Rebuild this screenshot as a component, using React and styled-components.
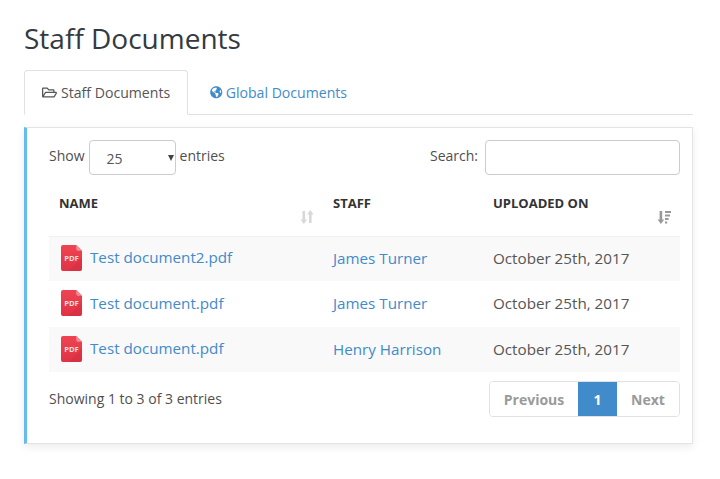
import React from "react";
import styled, { createGlobalStyle } from "styled-components";
import { FaRegFolderOpen, FaGlobeAmericas } from "react-icons/fa";

const Global = createGlobalStyle`
  html, body { margin: 0; padding: 0; background: #fff; }
  body { font-family: "Open Sans", "Noto Sans", sans-serif; font-size: 14px; color: #4a4a4a; }
  * { box-sizing: border-box; }
`;
const Page = styled.div`
  width: 720px;
  height: 479px;
  padding: 18px 27px 0 24px;
  overflow: hidden;
`;
const Title = styled.h1`
  margin: 0 0 12px;
  font-size: 28px;
  line-height: 40px;
  font-weight: 400;
  color: #333a42;
`;
const Tabs = styled.div`
  display: flex;
  height: 45px;
  border-bottom: 1px solid #e1e1e1;
  margin-bottom: 12px;
`;
const Tab = styled.div`
  height: 45px;
  display: flex;
  align-items: center;
  gap: ${p => (p.$active ? "4px" : "3px")};
  padding: 0 ${p => (p.$active ? "17px" : "21px")};
  border: 1px solid ${p => (p.$active ? "#e1e1e1" : "transparent")};
  border-bottom: 1px solid ${p => (p.$active ? "#fff" : "transparent")};
  border-radius: 4px 4px 0 0;
  background: ${p => (p.$active ? "#fff" : "transparent")};
  color: ${p => (p.$active ? "#555" : "#428bca")};
  font-size: 14.1px;
  svg { font-size: ${p => (p.$active ? "15px" : "12.5px")}; }
`;
const Panel = styled.section`
  height: 317px;
  border: 1px solid #e4e4e4;
  border-left: 3px solid #63bbee;
  padding: 12px 12px 0 22px;
  background: #fff;
  box-shadow: 0 3px 8px rgba(0, 0, 0, 0.08);
`;
const Controls = styled.div`
  display: flex;
  justify-content: space-between;
  align-items: center;
  height: 35px;
  margin-bottom: 15px;
`;
const Label = styled.label`
  display: flex;
  align-items: center;
  gap: 4px;
  color: #4f4f4f;
  line-height: 20px;
  margin-top: -4px;
`;
const FakeSelect = styled.div`
  position: relative;
  width: 87px;
  height: 35px;
  margin-top: 4px;
  border: 1px solid #ccc;
  border-radius: 4px;
  padding: 8px 0 0 17px;
  color: #555;
  line-height: 20px;
  &::after {
    content: "";
    position: absolute;
    right: 1px;
    top: 14px;
    border-left: 3.5px solid transparent;
    border-right: 3.5px solid transparent;
    border-top: 6px solid #444;
  }
`;
const SearchInput = styled.input`
  width: 195px;
  height: 35px;
  margin: 4px 0 0 3px;
  border: 1px solid #ccc;
  border-radius: 4px;
  background: #fff;
  outline: none;
`;
const Table = styled.table`
  width: 631px;
  table-layout: fixed;
  border-collapse: collapse;
`;
const HeadCell = styled.th`
  position: relative;
  width: ${p => p.$w}px;
  height: 46px;
  padding: 3px 10px 0;
  vertical-align: top;
  text-align: left;
  font-size: 13px;
  line-height: 20px;
  font-weight: 700;
  color: #333;
  border-bottom: 1px solid #eef1f4;
`;
const SortMark = styled.svg`
  position: absolute;
  right: ${p => p.$right}px;
  top: 19px;
  width: 16px;
  height: 16px;
`;
const Row = styled.tr`
  height: ${p => p.$h}px;
  background: ${p => (p.$odd ? "#f9f9f9" : "#fff")};
  & + & td { border-top: 1px solid #eef1f4; }
`;
const Cell = styled.td`
  padding: 0 10px 2px;
  font-size: 15.2px;
  line-height: 20px;
  color: #555;
  vertical-align: middle;
`;
const NameWrap = styled.div`
  display: flex;
  align-items: center;
  gap: 8px;
  margin: -1px 0 0 2px;
  svg { margin-top: 1px; flex: none; }
`;
const DocLink = styled.a`
  color: #428bca;
  text-decoration: none;
`;
const Footer = styled.div`
  display: flex;
  justify-content: space-between;
  align-items: flex-start;
  margin-top: 9px;
`;
const Info = styled.div`
  color: #4f4f4f;
  line-height: 20px;
  margin-top: 8px;
`;
const Pager = styled.div`
  display: flex;
  height: 36px;
  border: 1px solid #e1e1e1;
  border-radius: 4px;
  overflow: hidden;
`;
const PageBtn = styled.div`
  display: flex;
  align-items: center;
  justify-content: center;
  width: ${p => p.$w}px;
  margin: ${p => (p.$active ? "-1px 0" : "0")};
  background: ${p => (p.$active ? "#428bca" : "#fff")};
  color: ${p => (p.$active ? "#fff" : "#9a9a9a")};
  font-weight: 700;
`;

const PdfIcon = () => (
  <svg width="21" height="26" viewBox="0 0 22 27">
    <defs>
      <linearGradient id="pdfg" x1="0" y1="0" x2="0" y2="1">
        <stop offset="0" stopColor="#ee4452" />
        <stop offset="1" stopColor="#e03346" />
      </linearGradient>
    </defs>
    <path d="M2 0H16L22 6V25a2 2 0 0 1-2 2H2a2 2 0 0 1-2-2V2a2 2 0 0 1 2-2Z" fill="url(#pdfg)" />
    <path d="M16 0L22 6H18a2 2 0 0 1-2-2Z" fill="#f58a93" />
    <path d="M8 27L22 13V25a2 2 0 0 1-2 2Z" fill="#c8283a" opacity="0.3" />
    <text x="11" y="17" textAnchor="middle" fontFamily="'Open Sans', sans-serif" fontSize="8" fontWeight="700" fill="#fbdcdf">PDF</text>
  </svg>
);

const SortBoth = () => (
  <SortMark $right={8} viewBox="0 0 16 16" fill="#d8d8d8">
    <path d="M3.5 2h2.6v8.5h2L4.8 15 1.5 10.5h2Z" />
    <path d="M10 14V5.5H8L11.3 1l3.3 4.5h-2V14Z" />
  </SortMark>
);
const SortDesc = () => (
  <SortMark $right={8} viewBox="0 0 16 16" fill="#999">
    <path d="M3.6 2h2.6v8.5h2L4.9 15 1.6 10.5h2Z" />
    <path d="M9 2h6v2H9ZM9 5.5h5v2H9ZM9 9h3.6v2H9ZM9 12.5h2.2v2H9Z" />
  </SortMark>
);

const rows = [
  { file: "Test document2.pdf", staff: "James Turner", h: 45 },
  { file: "Test document.pdf", staff: "James Turner", h: 46 },
  { file: "Test document.pdf", staff: "Henry Harrison", h: 45 },
];

export default function App() {
  return (
    <Page>
      <Global />
      <Title>Staff Documents</Title>
      <Tabs>
        <Tab $active><FaRegFolderOpen /> Staff Documents</Tab>
        <Tab><FaGlobeAmericas /> Global Documents</Tab>
      </Tabs>
      <Panel>
        <Controls>
          <Label>Show <FakeSelect>25</FakeSelect> entries</Label>
          <Label>Search: <SearchInput /></Label>
        </Controls>
        <Table>
          <thead>
            <tr>
              <HeadCell $w={274}>NAME<SortBoth /></HeadCell>
              <HeadCell $w={160}>STAFF</HeadCell>
              <HeadCell $w={197}>UPLOADED ON<SortDesc /></HeadCell>
            </tr>
          </thead>
          <tbody>
            {rows.map((r, i) => (
              <Row key={i} $odd={i % 2 === 0} $h={r.h}>
                <Cell><NameWrap><PdfIcon /><DocLink>{r.file}</DocLink></NameWrap></Cell>
                <Cell><DocLink>{r.staff}</DocLink></Cell>
                <Cell>October 25th, 2017</Cell>
              </Row>
            ))}
          </tbody>
        </Table>
        <Footer>
          <Info>Showing 1 to 3 of 3 entries</Info>
          <Pager>
            <PageBtn $w={88}>Previous</PageBtn>
            <PageBtn $w={39} $active>1</PageBtn>
            <PageBtn $w={62}>Next</PageBtn>
          </Pager>
        </Footer>
      </Panel>
    </Page>
  );
}
